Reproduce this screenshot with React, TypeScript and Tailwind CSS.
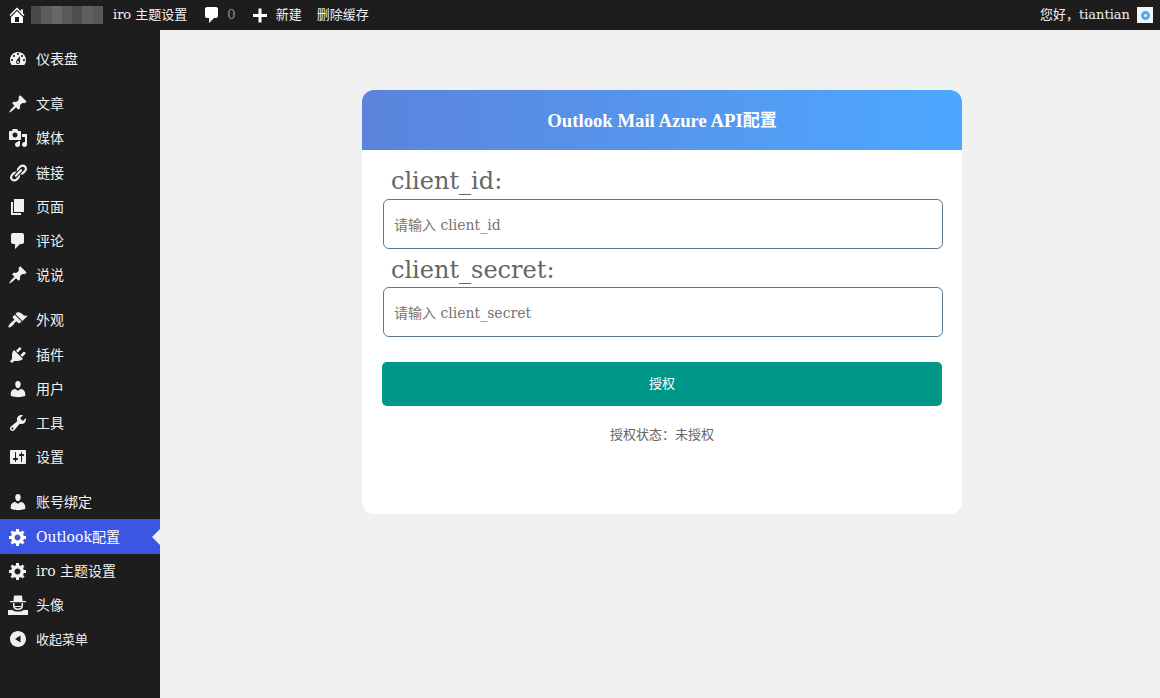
import React from "react";

const P: Record<string, string> = {
  dashboard: "M3.76 16h12.48c1.1-1.37 1.76-3.11 1.76-5 0-4.42-3.58-8-8-8s-8 3.58-8 8c0 1.89.66 3.63 1.76 5zM10 4c.55 0 1 .45 1 1s-.45 1-1 1-1-.45-1-1 .45-1 1-1zM6 6c.55 0 1 .45 1 1s-.45 1-1 1-1-.45-1-1 .45-1 1-1zm8 0c.55 0 1 .45 1 1s-.45 1-1 1-1-.45-1-1 .45-1 1-1zm-5.37 5.55L12 7v6c0 1.1-.9 2-2 2s-2-.9-2-2c0-.57.24-1.08.63-1.45zM4 10c.55 0 1 .45 1 1s-.45 1-1 1-1-.45-1-1 .45-1 1-1zm12 0c.55 0 1 .45 1 1s-.45 1-1 1-1-.45-1-1 .45-1 1-1zm-5 3c0-.55-.45-1-1-1s-1 .45-1 1 .45 1 1 1 1-.45 1-1z",
  pin: "M10.44 3.02l1.82-1.82 6.36 6.35-1.83 1.82c-1.05-.68-2.48-.57-3.41.36l-.75.75c-.92.93-1.04 2.35-.35 3.41l-1.83 1.82-2.41-2.41-2.8 2.79c-.42.42-3.38 2.71-3.8 2.29s1.86-3.39 2.28-3.81l2.79-2.79L4.1 9.36l1.83-1.82c1.05.69 2.48.57 3.4-.36l.75-.75c.93-.92 1.05-2.35.36-3.41z",
  media: "M13 11V4c0-.55-.45-1-1-1h-1.67L9 1H5L3.67 3H2c-.55 0-1 .45-1 1v7c0 .55.45 1 1 1h10c.55 0 1-.45 1-1zM7 4.5c1.38 0 2.5 1.12 2.5 2.5S8.38 9.5 7 9.5 4.5 8.38 4.5 7 5.62 4.5 7 4.5zM14 6h5v10.5c0 1.38-1.12 2.5-2.5 2.5S14 17.88 14 16.5s1.12-2.5 2.5-2.5c.17 0 .34.02.5.05V9h-3V6zm-4 8.05V13h2v3.5c0 1.38-1.12 2.5-2.5 2.5S7 17.88 7 16.5 8.12 14 9.5 14c.17 0 .34.02.5.05z",
  links: "M17.74 2.76c1.68 1.69 1.68 4.41 0 6.1l-1.53 1.52c-1.12 1.12-2.7 1.47-4.14 1.09l2.62-2.61.76-.77.76-.76c.84-.84.84-2.2 0-3.04-.84-.85-2.2-.85-3.04 0l-.77.76-3.38 3.38c-.37-1.44-.02-3.02 1.1-4.14l1.52-1.53c1.69-1.68 4.42-1.68 6.1 0zM8.59 13.43l5.34-5.34c.42-.42.42-1.1 0-1.52-.44-.43-1.13-.39-1.53 0l-5.33 5.34c-.42.42-.42 1.1 0 1.52.44.43 1.13.39 1.52 0zm-.76 2.29l4.14-4.15c.38 1.44.03 3.02-1.09 4.14l-1.52 1.53c-1.69 1.68-4.41 1.68-6.1 0-1.68-1.68-1.68-4.42 0-6.1l1.53-1.52c1.12-1.12 2.7-1.47 4.14-1.1l-4.14 4.15c-.85.84-.85 2.2 0 3.05.84.84 2.2.84 3.04 0z",
  page: "M6 15V2h10v13H6zm-1 1h8v2H3V5h2v11z",
  comment: "M5 2h9c1.1 0 2 .9 2 2v7c0 1.1-.9 2-2 2h-2l-5 5v-5H5c-1.1 0-2-.9-2-2V4c0-1.1.9-2 2-2z",
  brush: "M14.48 11.06L7.41 3.99l1.5-1.5c.5-.56 2.3-.47 3.51.32 1.21.8 1.43 1.28 2.91 2.1 1.18.64 2.45.83 4.45.85zm-.71.71L6.7 4.7 4.93 6.47c-.39.39-.39 1.02 0 1.41l1.06 1.06c.39.39.39 1.03 0 1.42-.6.6-1.43 1.11-2.21 1.69-.35.26-.7.53-1.01.84-1.43 1.43-2.4 3.02-2.4 3.6 0 .6.55 1 1.1 1 .65 0 2.2-1 3.6-2.4.31-.31.58-.66.84-1.01.58-.78 1.09-1.61 1.69-2.21.39-.39 1.03-.39 1.42 0l1.06 1.06c.39.39 1.02.39 1.41 0z",
  plug: "M13.11 4.36L9.87 7.6 8 5.73l3.24-3.24c.35-.34 1.05-.2 1.56.32.52.51.66 1.21.31 1.55zm-8 1.77l.91-1.12 9.01 9.01-1.19.84c-.71.71-2.63 1.16-3.82 1.16H6.14L4.9 17.26c-.59.59-1.54.59-2.12 0-.59-.58-.59-1.53 0-2.12l1.24-1.24v-3.88c0-1.13.4-3.19 1.09-3.89zm7.26 3.97l3.24-3.24c.34-.35 1.04-.21 1.55.31.52.51.66 1.21.31 1.55l-3.24 3.25z",
  user: "M10 9.25c-2.27 0-2.73-3.44-2.73-3.44C7 4.02 7.82 2 9.97 2c2.16 0 2.98 2.02 2.71 3.81 0 0-.41 3.44-2.68 3.44zm0 2.57L12.72 10c2.39 0 4.52 2.33 4.52 4.53v2.49s-3.65 1.13-7.24 1.13c-3.65 0-7.24-1.13-7.24-1.13v-2.49c0-2.25 1.94-4.48 4.47-4.48z",
  tool: "M16.68 9.77c-1.34 1.34-3.3 1.67-4.95.99l-5.41 6.52c-.99.99-2.59.99-3.58 0s-.99-2.59 0-3.57l6.52-5.42c-.68-1.65-.35-3.61.99-4.95 1.28-1.28 3.12-1.62 4.72-1.06l-2.89 2.89 2.82 2.82 2.86-2.87c.53 1.58.18 3.39-1.08 4.65zM3.81 16.21c.4.39 1.04.39 1.43 0 .4-.4.4-1.04 0-1.43-.39-.4-1.03-.4-1.43 0-.39.39-.39 1.03 0 1.43z",
  settings: "M18 16V4c0-.55-.45-1-1-1H3c-.55 0-1 .45-1 1v12c0 .55.45 1 1 1h14c.55 0 1-.45 1-1zM8 11h1c.55 0 1 .45 1 1s-.45 1-1 1H8v1.5c0 .28-.22.5-.5.5s-.5-.22-.5-.5V13H6c-.55 0-1-.45-1-1s.45-1 1-1h1V5.5c0-.28.22-.5.5-.5s.5.22.5.5V11zm5-2h-1c-.55 0-1-.45-1-1s.45-1 1-1h1V5.5c0-.28.22-.5.5-.5s.5.22.5.5V7h1c.55 0 1 .45 1 1s-.45 1-1 1h-1v5.5c0 .28-.22.5-.5.5s-.5-.22-.5-.5V9z",
  gear: "M18 12h-2.18c-.17.7-.44 1.35-.81 1.93l1.54 1.54-2.1 2.1-1.54-1.54c-.58.36-1.23.63-1.91.79V19H8v-2.18c-.68-.16-1.33-.43-1.91-.79l-1.54 1.54-2.12-2.12 1.54-1.54c-.36-.58-.63-1.23-.79-1.91H1V9.03h2.17c.16-.7.44-1.35.8-1.94L2.43 5.55l2.1-2.1 1.54 1.54c.58-.37 1.24-.64 1.93-.81V2h3v2.18c.68.16 1.33.43 1.91.79l1.54-1.54 2.12 2.12-1.54 1.54c.36.59.64 1.24.8 1.94H18V12zm-8.5 1.5c1.66 0 3-1.34 3-3s-1.34-3-3-3-3 1.34-3 3 1.34 3 3 3z",
  collapse: "M10 2c4.42 0 8 3.58 8 8s-3.58 8-8 8-8-3.58-8-8 3.58-8 8-8zm2.500 4.500L7 10l5.500 3.500v-7z",
  home: "M16 8.5l1.53 1.53-1.06 1.06L10 4.62l-6.47 6.47-1.06-1.06L10 2.5l4 4v-2h2v4zm-6-2.46l6 5.99V18H4v-5.97zM12 17v-5H8v5h4z",
  plus: "M17 9v3h-5.500v5.500h-3V12H3V9h5.500V3.500h3V9H17z",
  avatar: "M6 .5h8l.6 5.500H18v1.200H2V6h3.400zM5 8h1.500v2.500c0 2 1.500 3 3.500 3s3.500-1 3.500-3V8H15v3c0 2.500-2 4-5 4s-5-1.500-5-4zM7 11h6v1H7zM0 15h4.500c1 1 3 1.500 5.500 1.500s4.500-.5 5.500-1.500H20v5H0z",
};

function Ico({ n, s = 20, className = "" }: { n: string; s?: number; className?: string }) {
  return (
    <svg viewBox="0 0 20 20" width={s} height={s} fill="currentColor" fillRule="evenodd" className={"shrink-0 " + className}>
      <path d={P[n]} />
    </svg>
  );
}

function Row({ icon, label, active, sep, small }: { icon: string; label: string; active?: boolean; sep?: boolean; small?: boolean }) {
  return (
    <div className={"relative flex h-[34.2px] items-center pl-[8px] text-[#f0f0f1] " + (small ? "text-[13px] " : "text-[14px] ") + (active ? "bg-[#3c56e4] text-white " : "") + (sep ? "mb-[11px]" : "")}>
      <Ico n={icon} />
      <span className="ml-[8px] pt-[1px]">{label}</span>
      {active && (
        <span className="absolute right-0 top-1/2 -mt-[8px] h-0 w-0 border-y-[8px] border-r-[8px] border-y-transparent border-r-[#f0f0f1]" />
      )}
    </div>
  );
}

const blur = ["#4a4a4a", "#5c5c5c", "#686868", "#5a5a5a", "#4e4e4e", "#5f5f5f", "#575757"];

export default function App() {
  return (
    <div className="flex h-[698px] w-[1160px] flex-col overflow-hidden bg-[#f0f0f1] font-['DejaVu_Serif','Noto_Sans_CJK_SC',serif]">
      <header className="flex h-[30px] shrink-0 items-center bg-[#1d1d1d] pl-[7px] pr-[7px] text-[13px] text-[#f0f0f1]">
        <Ico n="home" className="text-white" />
        <div className="ml-[4px] flex h-[18px] w-[72px]">
          {blur.map((c, i) => (
            <div key={i} className="flex-1" style={{ background: c }} />
          ))}
        </div>
        <span className="ml-[10px]">iro 主题设置</span>
        <Ico n="comment" className="ml-[15px] text-white" />
        <span className="ml-[5px] text-[#8c8f94]">0</span>
        <Ico n="plus" className="ml-[14px] text-white" />
        <span className="ml-[6px]">新建</span>
        <span className="ml-[15px]">删除缓存</span>
        <span className="ml-auto">您好，tiantian</span>
        <span className="ml-[7px] flex h-[16px] w-[16px] items-center justify-center bg-[#eef6fc]">
          <span className="h-[9px] w-[9px] rounded-full border-[3px] border-[#5aa9e6]" />
        </span>
      </header>
      <div className="flex min-h-0 flex-1">
        <aside className="w-[160px] shrink-0 bg-[#1d1d1d] pt-[12px]">
          <Row icon="dashboard" label="仪表盘" sep />
          <Row icon="pin" label="文章" />
          <Row icon="media" label="媒体" />
          <Row icon="links" label="链接" />
          <Row icon="page" label="页面" />
          <Row icon="comment" label="评论" />
          <Row icon="pin" label="说说" sep />
          <Row icon="brush" label="外观" />
          <Row icon="plug" label="插件" />
          <Row icon="user" label="用户" />
          <Row icon="tool" label="工具" />
          <Row icon="settings" label="设置" sep />
          <Row icon="user" label="账号绑定" />
          <Row icon="gear" label="Outlook配置" active />
          <Row icon="gear" label="iro 主题设置" />
          <Row icon="avatar" label="头像" />
          <Row icon="collapse" label="收起菜单" small />
        </aside>
        <main className="min-w-0 flex-1 pl-[202px] pt-[60px]">
          <section className="flex h-[424px] w-[600px] flex-col overflow-hidden rounded-[12px] bg-white">
            <div className="flex h-[60px] shrink-0 items-center justify-center bg-gradient-to-r from-[#5b84dc] to-[#4ca8ff] pt-[2px] font-['Liberation_Serif','Noto_Sans_CJK_SC',serif] text-[18.7px] font-bold text-white">
              Outlook Mail Azure API<span className="text-[17px]">配置</span>
            </div>
            <div className="flex flex-col px-[21px] pt-[14px]">
              <label className="ml-[8px] h-[35px] pt-[1px] text-[24px] leading-[32px] text-[#666666]">client_id:</label>
              <input
                placeholder="请输入 client_id"
                className="h-[50px] w-[560px] rounded-[6px] border border-[#5d7688] px-[10px] pt-[2px] text-[14px] outline-none placeholder:text-[#757575]"
              />
              <label className="ml-[8px] mt-[5px] h-[33px] text-[24px] leading-[32px] text-[#666666]">client_secret:</label>
              <input
                placeholder="请输入 client_secret"
                className="h-[50px] w-[560px] rounded-[6px] border border-[#5d7688] px-[10px] pt-[2px] text-[14px] outline-none placeholder:text-[#757575]"
              />
              <button className="-ml-[1px] mt-[25px] h-[44px] w-[560px] rounded-[5px] bg-[#009688] text-[13px] text-white">授权</button>
              <p className="mt-[19px] text-center text-[13px] text-[#666666]">授权状态：未授权</p>
            </div>
          </section>
        </main>
      </div>
    </div>
  );
}
